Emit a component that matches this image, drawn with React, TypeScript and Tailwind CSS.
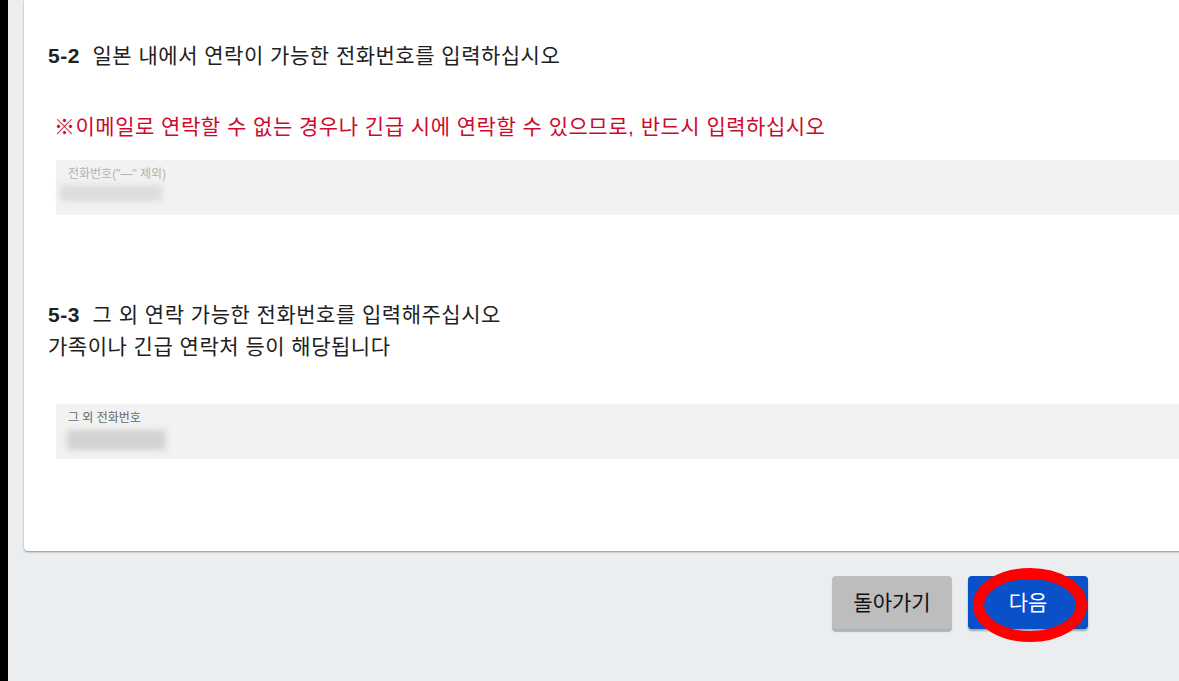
import React from 'react';

const font = "font-['Liberation_Sans','Noto_Sans_CJK_KR',sans-serif]";

function PhoneField({ label, labelColor, blurClass }: { label: string; labelColor: string; blurClass: string }) {
  return (
    <div className="ml-[8px] h-[55px] bg-[#f2f2f2] pt-[7px]">
      <p className={`pl-[12px] text-[12px] leading-[15px] tracking-normal ${labelColor}`}>{label}</p>
      <div className={blurClass} />
    </div>
  );
}

export default function App() {
  return (
    <div className={`flex w-[1179px] h-[681px] overflow-hidden bg-[#eaeef1] ${font}`}>
      <div className="w-[8px] shrink-0 bg-black" />

      <div className="flex flex-col pl-[16px]">
        {/* form card, runs past the right edge */}
        <div className="w-[1200px] shrink-0 bg-white rounded-b-[4px] shadow-[0_1px_2px_rgba(0,0,0,0.4)] pl-[24px] pt-[40px] pb-[92px] text-[21px] leading-[32px] tracking-[0.5px] text-[#212121]">
          <p>
            <span className="font-bold">5-2</span>&nbsp; 일본 내에서 연락이 가능한 전화번호를 입력하십시오
          </p>

          <p className="mt-[39px] pl-[6px] text-[#cc0a2e]">
            ※이메일로 연락할 수 없는 경우나 긴급 시에 연락할 수 있으므로, 반드시 입력하십시오
          </p>

          <div className="mt-[17px]">
            <PhoneField
              label={'전화번호("—" 제외)'}
              labelColor="text-[#b3b3b3]"
              blurClass="mt-[3px] ml-[4px] w-[102px] h-[16px] bg-[#dcdcdc] blur-[3px]"
            />
          </div>

          <p className="mt-[84px]">
            <span className="font-bold">5-3</span>&nbsp; 그 외 연락 가능한 전화번호를 입력해주십시오
          </p>
          <p>가족이나 긴급 연락처 등이 해당됩니다</p>

          <div className="mt-[41px]">
            <PhoneField
              label="그 외 전화번호"
              labelColor="text-[#666666]"
              blurClass="mt-[4px] ml-[11px] w-[99px] h-[20px] bg-[#d2d2d2] blur-[3px]"
            />
          </div>
        </div>

        {/* nav buttons */}
        <div className="mt-[25px] flex justify-end gap-[16px] pr-[91px] w-[1155px]">
          <button className="w-[120px] h-[53px] rounded-[4px] bg-[#bdbdbd] text-[21px] text-[#111] shadow-[0_3px_1px_rgba(0,0,0,0.25)]">
            돌아가기
          </button>
          <div className="relative">
            <button className="w-[120px] h-[53px] rounded-[4px] bg-[#0a50c8] text-[21px] text-white shadow-[0_2px_2px_rgba(0,0,0,0.3)]">
              다음
            </button>
            <svg
              className="absolute left-[5px] top-[-8px] pointer-events-none"
              width="114"
              height="74"
              viewBox="0 0 114 74"
            >
              <ellipse cx="57" cy="37" rx="51.5" ry="31.5" fill="none" stroke="#ff0000" strokeWidth="11" />
            </svg>
          </div>
        </div>
      </div>
    </div>
  );
}
